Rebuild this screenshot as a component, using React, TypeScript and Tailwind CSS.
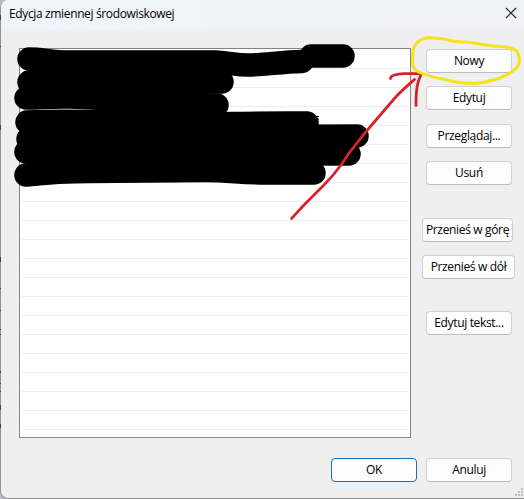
import React from 'react';

type DialogButtonProps = {
  label: string;
  className?: string;
  primary?: boolean;
};

function DialogButton({ label, className = 'w-[86px]', primary = false }: DialogButtonProps) {
  const border = primary ? 'border-[#1a6fb3]' : 'border-[#d0d0d0] border-b-[#bcbcbc]';
  return (
    <button
      type="button"
      className={`flex h-6 shrink-0 items-center justify-center whitespace-nowrap rounded-[4px] border bg-[#fdfdfd] pb-px ${border} ${className}`}
    >
      {label}
    </button>
  );
}

const rows = Array.from({ length: 20 }, (_, i) => i);

function Annotations() {
  return (
    <svg
      className="pointer-events-none absolute left-0 top-0"
      width="524"
      height="499"
      viewBox="0 0 524 499"
      fill="none"
      strokeLinecap="round"
      strokeLinejoin="round"
    >
      <g stroke="#000" strokeWidth="23.5">
        <path d="M29 59C42 59 52 62 68 62H215C232 63 236 65 248 65C265 65 280 62 302 61.5" />
        <path d="M311 56H343" />
        <path d="M29 82H222" />
        <path d="M26 98C42 98 50 96.500 70 97C120 98 160 105 217 105" />
        <path d="M27 122C80 119 150 124 200 124C230 124 250 122.500 307 123" />
        <path d="M28 139C120 140 240 136 357 136" />
        <path d="M26 152C100 153 240 154 349 154" />
        <path d="M26 175C45 173 60 171.500 90 171.500L205 170.500C230 170.500 240 173 265 173H314" />
      </g>
      <path d="M314.500 116.500H319M316 119H319M316 122H318.500" stroke="#000" strokeLinecap="butt" />
      <path
        d="M291.500 218.500C297 213 300 209 304 205L323 186C330 179 336 172 341 165C346 158 349 152 354 147C358 142 362 136 367 130.500L394 99C401 91 407 86 414.500 79.500M390.500 78.500C390.500 75 398 74 404 73.700H421.500C417 82 416 90 416 105.500"
        stroke="#d3242a"
        strokeWidth="2.800"
      />
      <path
        d="M455 41.500C446 39 438 38 430 37.800C422 38 414 42 413 52C412 65 412 69 419 72C427 76 437 78 447 80C458 83 466 83.500 475 83.300C485 83 492 80 500 78C510 74 520 68 519.500 60C519 50 514 48 507 47.300C498 46 489 46 480 44C472 42.500 463 42 455 41.500"
        stroke="#f8e11d"
        strokeWidth="3"
      />
      {/* slivers of the page behind the dialog's left edge */}
      <path
        d="M.5 15v5M.5 46v1M.5 125v5M.5 257v5M.5 288v1M.5 310v1M.5 329v1M.5 334v1M.5 371v2M.5 383v1M.5 391v1M.5 405v5M.5 424v4"
        stroke="#3c3f44"
        strokeLinecap="butt"
      />
    </svg>
  );
}

export default function App() {
  return (
    <div className="relative flex h-[499px] w-[524px] flex-col overflow-hidden bg-[#b9bcc0] font-['Open_Sans','Noto_Sans',sans-serif] text-[12px] leading-4 tracking-[-0.34px] text-black">
      <div className="flex h-[499px] w-[525px] flex-col overflow-hidden rounded-l-[8px] border-b border-l border-[#949494] bg-[#efefef]">
        <header className="flex h-[29px] shrink-0 items-center justify-between bg-linear-to-r from-[#eff4fb] to-[#f1f1f8] pl-2 pr-2">
          <h1 className="pb-px tracking-[-0.36px]">Edycja zmiennej środowiskowej</h1>
          <svg className="mb-[3px]" width="12" height="12" viewBox="0 0 12 12" stroke="#222" strokeWidth="1.100">
            <path d="M1 1L11 11M11 1L1 11" />
          </svg>
        </header>
        <main className="flex pl-[18px] pt-[19px]">
          <div className="h-[390px] w-[392px] shrink-0 overflow-hidden border border-[#828386] bg-white px-px">
            {rows.map((row) => (
              <div key={row} className="h-[19px] border-b border-[#ededed] first:h-5" />
            ))}
          </div>
          <aside className="flex w-[94px] flex-col pl-[11px] pt-px">
            <DialogButton label="Nowy" className="ml-1 w-[86px]" />
            <DialogButton label="Edytuj" className="ml-1 mt-[13px] w-[86px]" />
            <DialogButton label="Przeglądaj..." className="ml-1 mt-3.5 w-[86px]" />
            <DialogButton label="Usuń" className="ml-1 mt-[13px] w-[86px]" />
            <DialogButton label="Przenieś w górę" className="mt-[33px] w-[91px]" />
            <DialogButton label="Przenieś w dół" className="mt-[13px] w-[93px]" />
            <DialogButton label="Edytuj tekst..." className="ml-1 mt-8 w-[86px]" />
          </aside>
        </main>
        <footer className="flex pl-[330px] pt-5">
          <DialogButton label="OK" primary />
          <DialogButton label="Anuluj" className="ml-[9px] w-[86px]" />
          <svg className="ml-[3px] mt-[30px] shrink-0" width="8" height="8" viewBox="0 0 8 8" fill="#bdbdbd">
            <path d="M6 0h2v2H6zM3 3h2v2H3zM6 3h2v2H6zM0 6h2v2H0zM3 6h2v2H3zM6 6h2v2H6z" />
          </svg>
        </footer>
      </div>
      <Annotations />
    </div>
  );
}
